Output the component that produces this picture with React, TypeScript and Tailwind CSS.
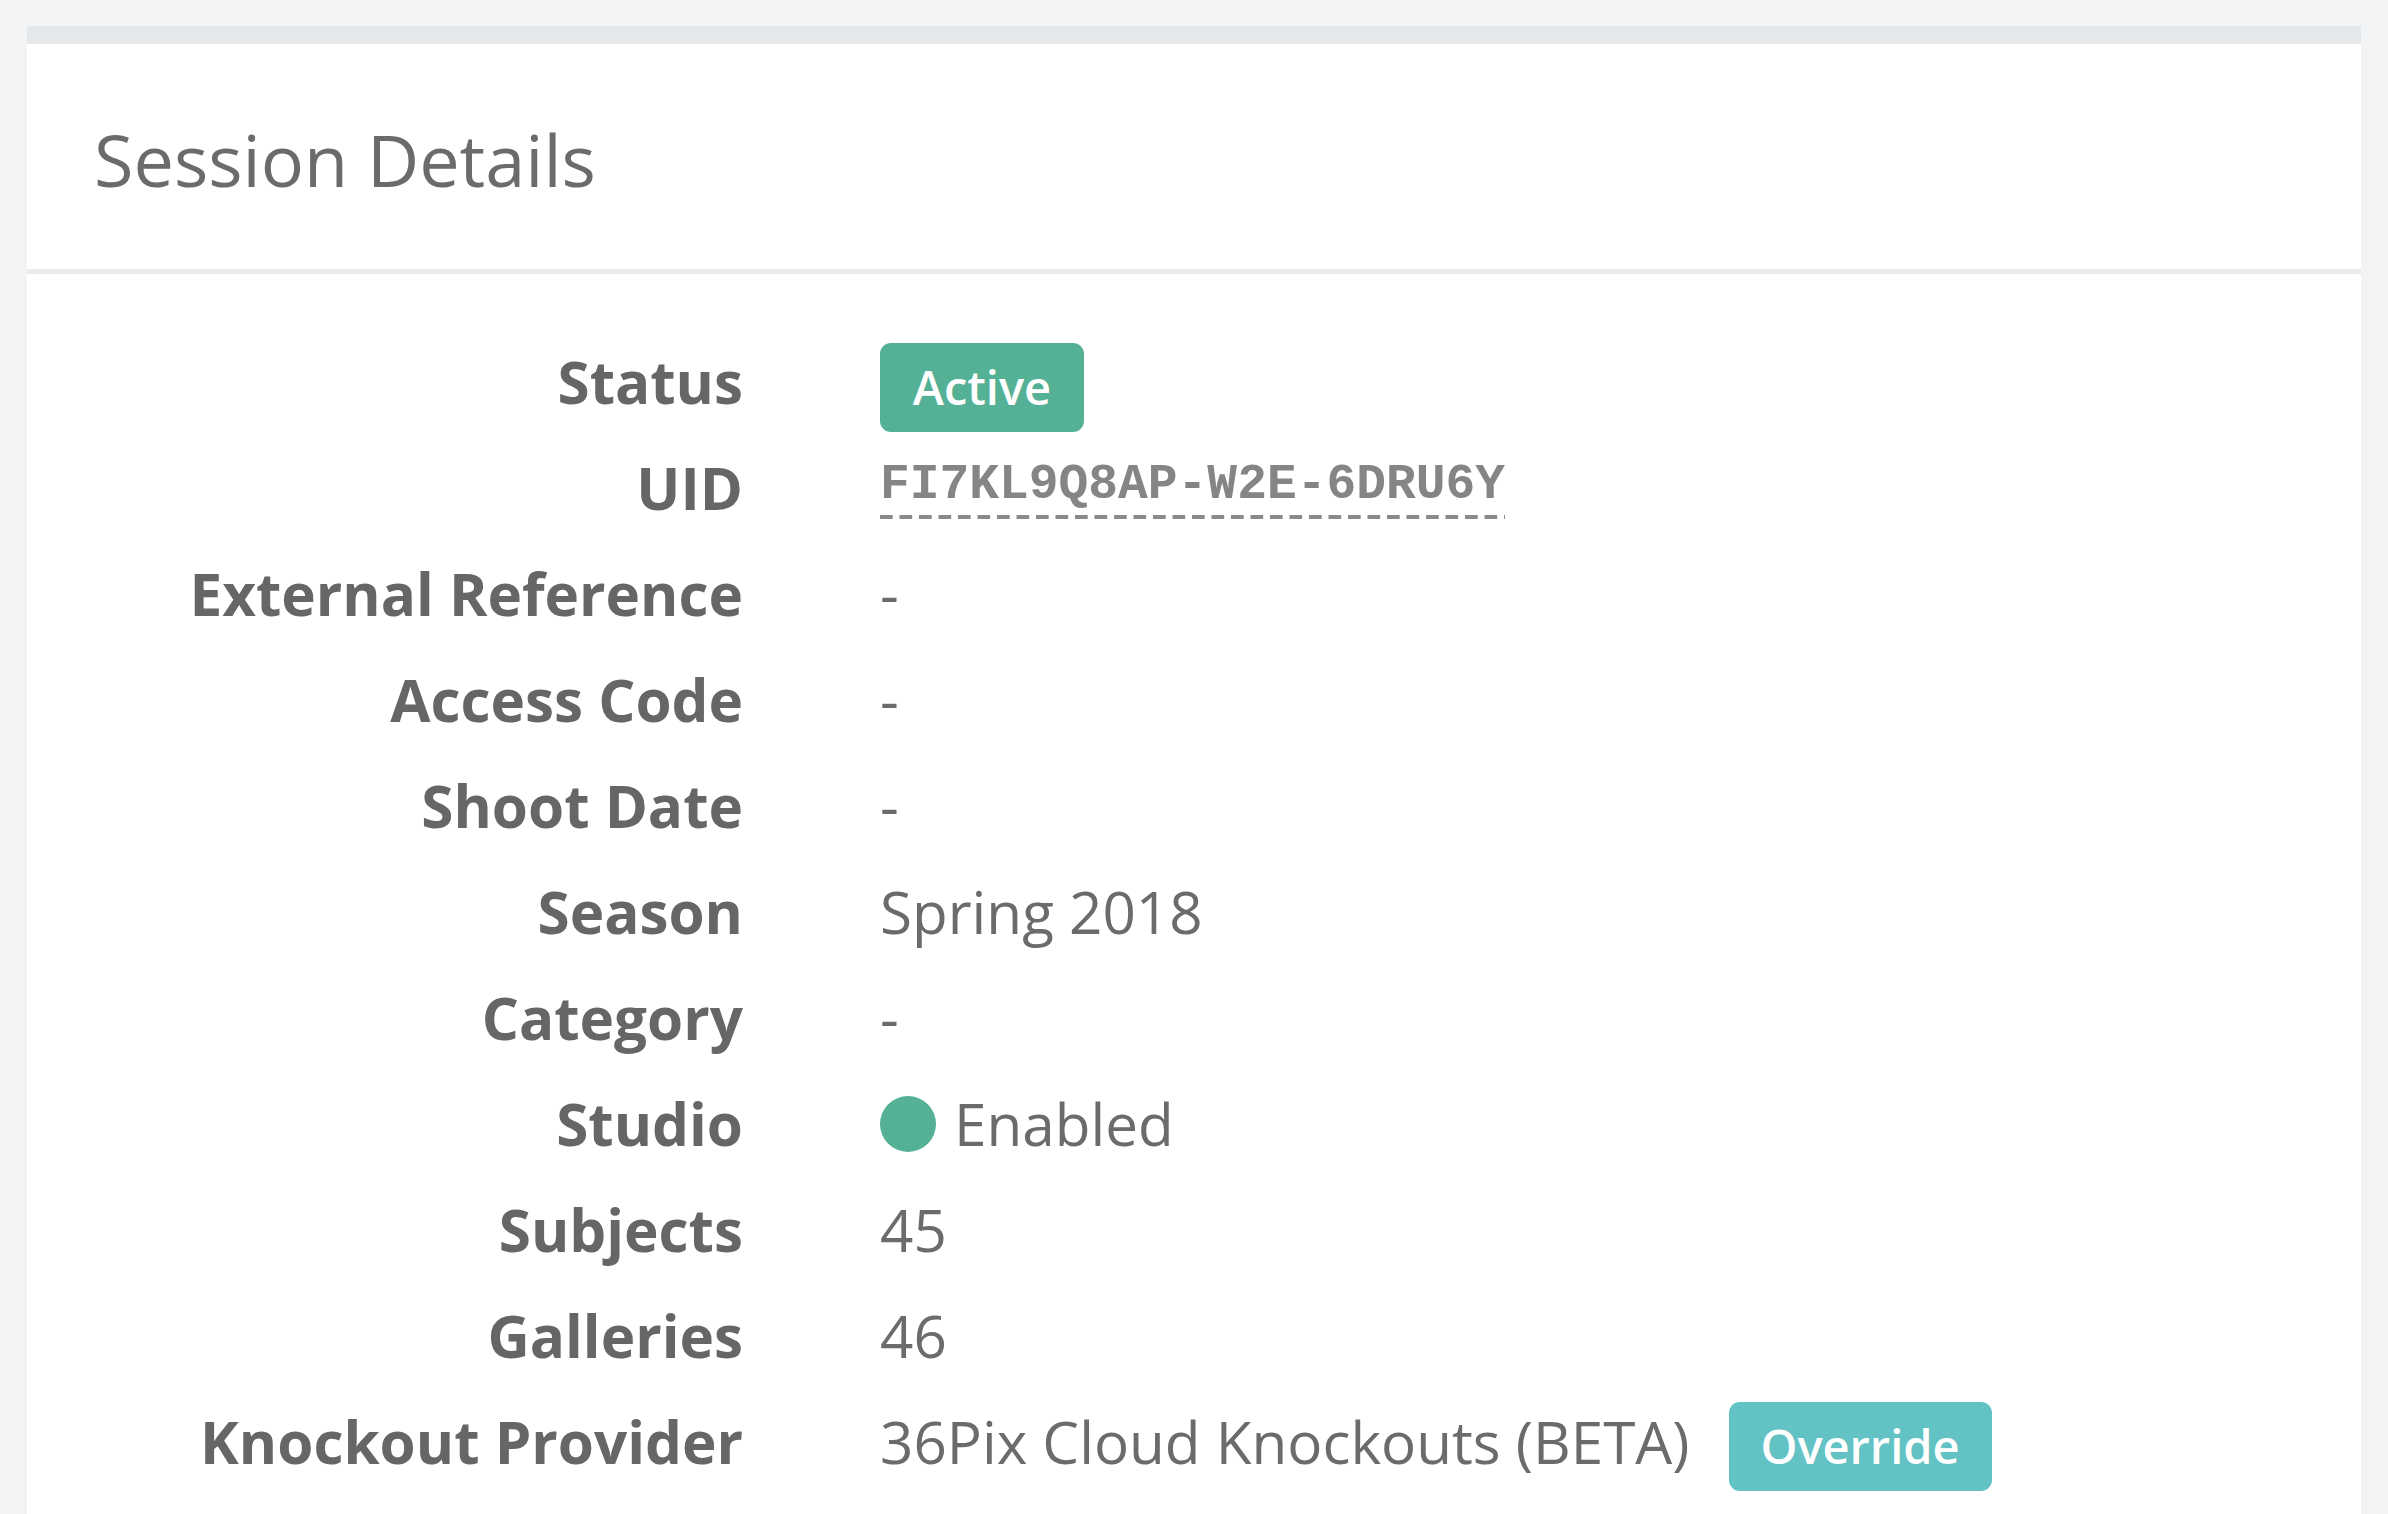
import React from "react";

const rows: { label: string; value: React.ReactNode }[] = [
  {
    label: "Status",
    value: (
      <span className="mt-[10px] inline-flex h-[89px] w-[204px] items-center justify-center rounded-[11px] bg-[#55b195] text-[47px] font-semibold text-white">
        Active
      </span>
    ),
  },
  {
    label: "UID",
    value: (
      <span className="bg-[linear-gradient(to_right,#8a8a8a_13px,transparent_13px)] bg-[length:19.5px_4px] bg-bottom-left bg-repeat-x pb-[6px] font-['Liberation_Mono',monospace] text-[49.6px] font-bold leading-[56px] text-[#858585]">
        FI7KL9Q8AP-W2E-6DRU6Y
      </span>
    ),
  },
  { label: "External Reference", value: "-" },
  { label: "Access Code", value: "-" },
  { label: "Shoot Date", value: "-" },
  { label: "Season", value: "Spring 2018" },
  { label: "Category", value: "-" },
  {
    label: "Studio",
    value: (
      <span className="flex items-center gap-[18px]">
        <span className="h-[56px] w-[56px] rounded-full bg-[#55b195]" />
        Enabled
      </span>
    ),
  },
  { label: "Subjects", value: "45" },
  { label: "Galleries", value: "46" },
  {
    label: "Knockout Provider",
    value: (
      <span className="flex items-center gap-[39px]">
        36Pix Cloud Knockouts (BETA)
        <span className="mt-[8px] inline-flex h-[89px] w-[263px] items-center justify-center rounded-[11px] bg-[#62c2c4] text-[47px] font-semibold text-white">
          Override
        </span>
      </span>
    ),
  },
];

export default function App() {
  return (
    <div className="min-h-screen bg-[#f2f3f5] px-[27px] pt-[26px] font-['Open_Sans',sans-serif] text-[#696969]">
      <div className="border-t-[18px] border-[#e5e8eb] bg-white">
        <div className="flex h-[230px] items-center border-b-[5px] border-[#e9ebee] px-[67px]">
          <h2 className="pt-[4px] text-[72px] font-normal text-[#6b6b6b]">Session Details</h2>
        </div>

        <div className="pt-[55px] pb-[40px]">
          {rows.map((row) => (
            <div key={row.label} className="flex h-[106px] items-center">
              <div className="w-[716px] text-right text-[58.4px] font-bold text-[#666666]">
                {row.label}
              </div>
              <div className="ml-[137px] flex items-center text-[58.4px] text-[#6b6b6b]">
                {row.value}
              </div>
            </div>
          ))}
        </div>
      </div>
    </div>
  );
}
